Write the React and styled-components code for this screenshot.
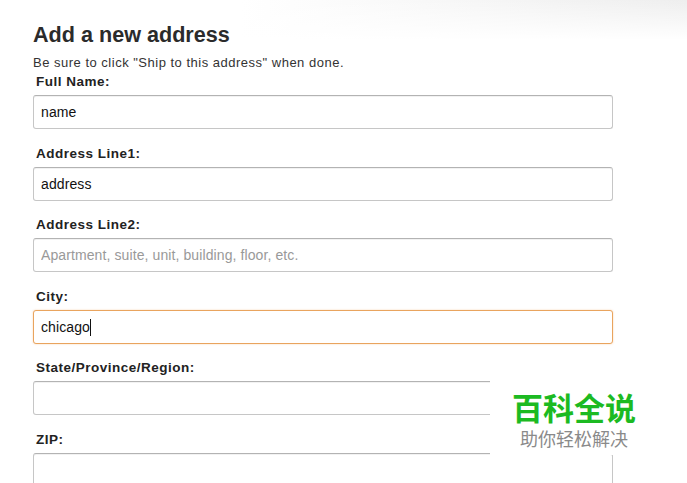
import React from 'react';
import styled, { createGlobalStyle } from 'styled-components';

const GlobalStyle = createGlobalStyle`
  html, body {
    margin: 0;
    padding: 0;
  }
  body {
    font-family: "Liberation Sans", Arial, sans-serif;
    color: #333;
    background:
      linear-gradient(to bottom, rgba(255, 255, 255, 0), #fff) 0 0 / 100% 40px no-repeat,
      linear-gradient(to right, #fff 35%, #eeeeee 100%) 0 0 / 100% 40px no-repeat,
      #fff;
  }
`;

const Page = styled.div`
  position: relative;
  width: 687px;
  height: 483px;
  overflow: hidden;
  padding-left: 33px;
  box-sizing: border-box;
`;

const Title = styled.h1`
  margin: 23px 0 0;
  font-size: 21.6px;
  line-height: 24px;
  font-weight: 700;
  color: #2b2b2b;
`;

const Hint = styled.p`
  margin: 8px 0 0;
  font-size: 13px;
  line-height: 16px;
  letter-spacing: 0.5px;
  color: #333;
`;

const Form = styled.form`
  display: flex;
  flex-direction: column;
  width: 580px;
  margin-top: 3px;
`;

const Group = styled.div`
  display: flex;
  flex-direction: column;
  gap: 5px;
  & + & {
    margin-top: 16.5px;
  }
`;

const Label = styled.label`
  padding-left: 3px;
  font-size: 13.5px;
  line-height: 16px;
  letter-spacing: 0.5px;
  font-weight: 700;
  color: #222;
`;

const InputWrap = styled.div`
  position: relative;
`;

const Input = styled.input`
  display: block;
  box-sizing: border-box;
  width: 100%;
  height: 34px;
  padding: 0 7px;
  font-family: "Liberation Sans", Arial, sans-serif;
  font-size: 14px;
  letter-spacing: 0.1px;
  color: #111;
  background: #fff;
  border: 1px solid ${({ $focus }) => ($focus ? '#e9a45e' : '#c6c6c6')};
  border-top-color: ${({ $focus }) => ($focus ? '#e9a45e' : '#b3b3b3')};
  border-radius: 3px;
  box-shadow: ${({ $focus }) =>
    $focus ? '0 0 2px rgba(228, 121, 17, 0.35)' : 'inset 0 1px 0 rgba(0, 0, 0, 0.05)'};
  outline: none;
  &::placeholder {
    color: #999;
  }
`;

const Caret = styled.span`
  position: absolute;
  top: 9px;
  left: 57px;
  width: 1px;
  height: 17px;
  background: #111;
`;

const Watermark = styled.div`
  position: absolute;
  left: 490px;
  top: 378px;
  width: 168px;
  height: 77px;
  padding-top: 12px;
  box-sizing: border-box;
  background: #fff;
  display: flex;
  flex-direction: column;
  align-items: center;
  font-family: "Noto Sans CJK SC", sans-serif;
`;

const Brand = styled.div`
  font-size: 31px;
  line-height: 34px;
  font-weight: 700;
  color: #1cba22;
`;

const Slogan = styled.div`
  margin-top: 4px;
  font-size: 18px;
  line-height: 20px;
  color: #8a8a8a;
`;

const fields = [
  { id: 'name', label: 'Full Name:', value: 'name' },
  { id: 'addr1', label: 'Address Line1:', value: 'address' },
  { id: 'addr2', label: 'Address Line2:', placeholder: 'Apartment, suite, unit, building, floor, etc.' },
  { id: 'city', label: 'City:', value: 'chicago', focus: true },
  { id: 'state', label: 'State/Province/Region:' },
  { id: 'zip', label: 'ZIP:' },
];

export default function App() {
  return (
    <Page>
      <GlobalStyle />
      <Title>Add a new address</Title>
      <Hint>Be sure to click "Ship to this address" when done.</Hint>
      <Form onSubmit={(e) => e.preventDefault()}>
        {fields.map((f) => (
          <Group key={f.id}>
            <Label htmlFor={f.id}>{f.label}</Label>
            <InputWrap>
              <Input
                id={f.id}
                type="text"
                defaultValue={f.value}
                placeholder={f.placeholder}
                $focus={f.focus}
              />
              {f.focus && <Caret />}
            </InputWrap>
          </Group>
        ))}
      </Form>
      <Watermark>
        <Brand>百科全说</Brand>
        <Slogan>助你轻松解决</Slogan>
      </Watermark>
    </Page>
  );
}
